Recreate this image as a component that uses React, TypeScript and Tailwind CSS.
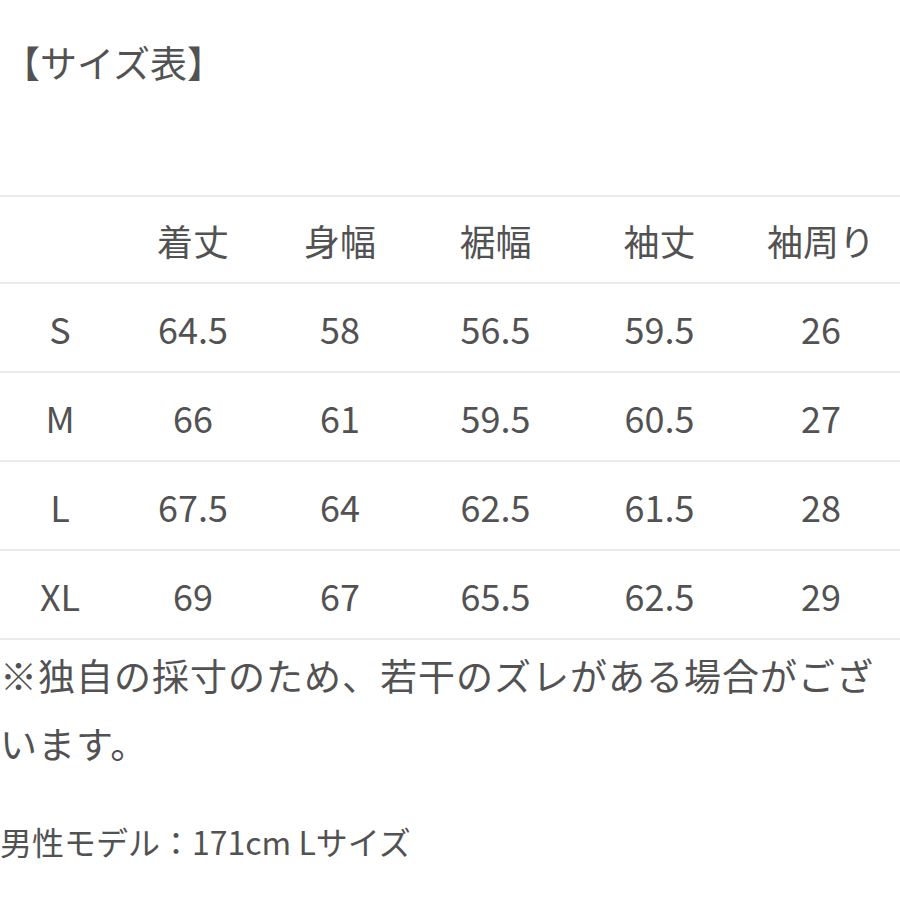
import React from "react";

const cols = ["w-[120px]", "w-[146px]", "w-[148px]", "w-[163px]", "w-[165px]", "w-[158px]"];
const header = ["", "着丈", "身幅", "裾幅", "袖丈", "袖周り"];
const rows = [
  ["S", "64.5", "58", "56.5", "59.5", "26"],
  ["M", "66", "61", "59.5", "60.5", "27"],
  ["L", "67.5", "64", "62.5", "61.5", "28"],
  ["XL", "69", "67", "65.5", "62.5", "29"],
];

function Row({ cells, top }: { cells: string[]; top?: boolean }) {
  return (
    <div
      className={
        "flex h-[89px] items-center border-b-2 border-[#ebebeb] " +
        (top ? "border-t-2" : "")
      }
    >
      {cells.map((c, i) => (
        <div key={i} className={cols[i] + " text-center"}>
          {c}
        </div>
      ))}
    </div>
  );
}

export default function App() {
  return (
    <div
      className="w-[900px] h-[900px] bg-white text-[#525252] overflow-hidden"
      style={{ fontFamily: '"Noto Sans CJK JP", "Noto Sans", sans-serif' }}
    >
      <div className="pt-[40px] pl-[3px] text-[37px] leading-[44px]">【サイズ表】</div>
      <div className="mt-[111px] text-[36px] leading-none">
        <Row cells={header} top />
        {rows.map((r, i) => (
          <Row key={i} cells={r} />
        ))}
      </div>
      <div className="text-[37px] leading-[68px] tracking-[1px] pt-[1px]">
        ※独自の採寸のため、若干のズレがある場合がございます。
      </div>
      <div className="mt-[42px] text-[32px] leading-[45px]">男性モデル：171cm Lサイズ</div>
    </div>
  );
}
